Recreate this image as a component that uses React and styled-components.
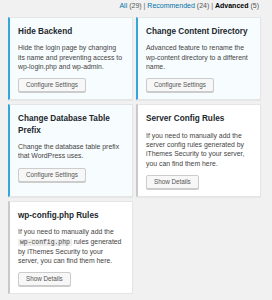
import React from "react";
import styled, { createGlobalStyle } from "styled-components";

const Global = createGlobalStyle`
  html, body { margin: 0; padding: 0; background: #f1f1f1; }
  body { font-family: "Liberation Sans", Arial, sans-serif; }
`;

const Page = styled.div`
  width: 253px;
  padding: 0 0 0 8px;
`;

const Filters = styled.ul`
  list-style: none;
  margin: 0 0 6px;
  padding: 0 2px 0 0;
  display: flex;
  justify-content: flex-end;
  font-size: 7px;
  line-height: 11px;
  color: #555;
  white-space: pre;
`;

const FilterItem = styled.li`
  color: #666;
`;

const FilterLink = styled.a`
  color: ${(p) => (p.$current ? "#000" : "#0073aa")};
  font-weight: ${(p) => (p.$current ? 700 : 400)};
  text-decoration: none;
`;

const Count = styled.span`
  color: #555;
`;

const Grid = styled.div`
  display: grid;
  grid-template-columns: 125px 125px;
  column-gap: 3px;
  row-gap: 4px;
`;

const Card = styled.div`
  box-sizing: border-box;
  background: ${(p) => (p.$active ? "#f7fcfe" : "#fff")};
  border: 1px solid #e5e5e5;
  border-left: 2px solid ${(p) => (p.$active ? "#34a7d8" : "#c9c9c9")};
  box-shadow: 0 1px 1px rgba(0, 0, 0, 0.04);
  padding: 8px 9px 7px 8px;
  display: flex;
  flex-direction: column;
  align-items: flex-start;
`;

const Title = styled.h3`
  margin: 0 0 6px;
  font-size: 8.2px;
  line-height: 11.4px;
  font-weight: 700;
  color: #23282d;
`;

const Text = styled.p`
  margin: 0 0 7px;
  font-size: 6.86px;
  line-height: 9.3px;
  color: #444;
`;

const Code = styled.code`
  font-family: "Liberation Mono", "Courier New", monospace;
  font-size: 6.4px;
  line-height: 8px;
  background: rgba(0, 0, 0, 0.07);
  padding: 0 2px;
`;

const Button = styled.button`
  box-sizing: border-box;
  height: 14px;
  margin: 0;
  padding: 0 7px;
  font-family: "Liberation Sans", Arial, sans-serif;
  font-size: 6.3px;
  line-height: 12px;
  color: #555;
  background: #f7f7f7;
  border: 1px solid #ccc;
  border-radius: 2px;
  box-shadow: 0 1px 0 #ccc;
  white-space: nowrap;
`;

const filters = [
  { label: "All", count: 29 },
  { label: "Recommended", count: 24 },
  { label: "Advanced", count: 5, current: true },
];

export default function App() {
  return (
    <>
      <Global />
      <Page>
        <Filters>
          {filters.map((f, i) => (
            <FilterItem key={f.label}>
              <FilterLink $current={f.current}>{f.label}</FilterLink>{" "}
              <Count>({f.count})</Count>
              {i < filters.length - 1 ? " | " : ""}
            </FilterItem>
          ))}
        </Filters>
        <Grid>
          <Card $active>
            <Title>Hide Backend</Title>
            <Text>
              Hide the login page by changing its name and preventing access to
              wp-login.php and wp-admin.
            </Text>
            <Button>Configure Settings</Button>
          </Card>
          <Card $active>
            <Title>Change Content Directory</Title>
            <Text>
              Advanced feature to rename the wp-content directory to a different
              name.
            </Text>
            <Button>Configure Settings</Button>
          </Card>
          <Card $active>
            <Title>Change Database Table Prefix</Title>
            <Text>Change the database table prefix that WordPress uses.</Text>
            <Button>Configure Settings</Button>
          </Card>
          <Card>
            <Title>Server Config Rules</Title>
            <Text>
              If you need to manually add the server config rules generated by
              iThemes Security to your server, you can find them here.
            </Text>
            <Button>Show Details</Button>
          </Card>
          <Card>
            <Title>wp-config.php Rules</Title>
            <Text>
              If you need to manually add the <Code>wp-config.php</Code> rules
              generated by iThemes Security to your server, you can find them
              here.
            </Text>
            <Button>Show Details</Button>
          </Card>
        </Grid>
      </Page>
    </>
  );
}
